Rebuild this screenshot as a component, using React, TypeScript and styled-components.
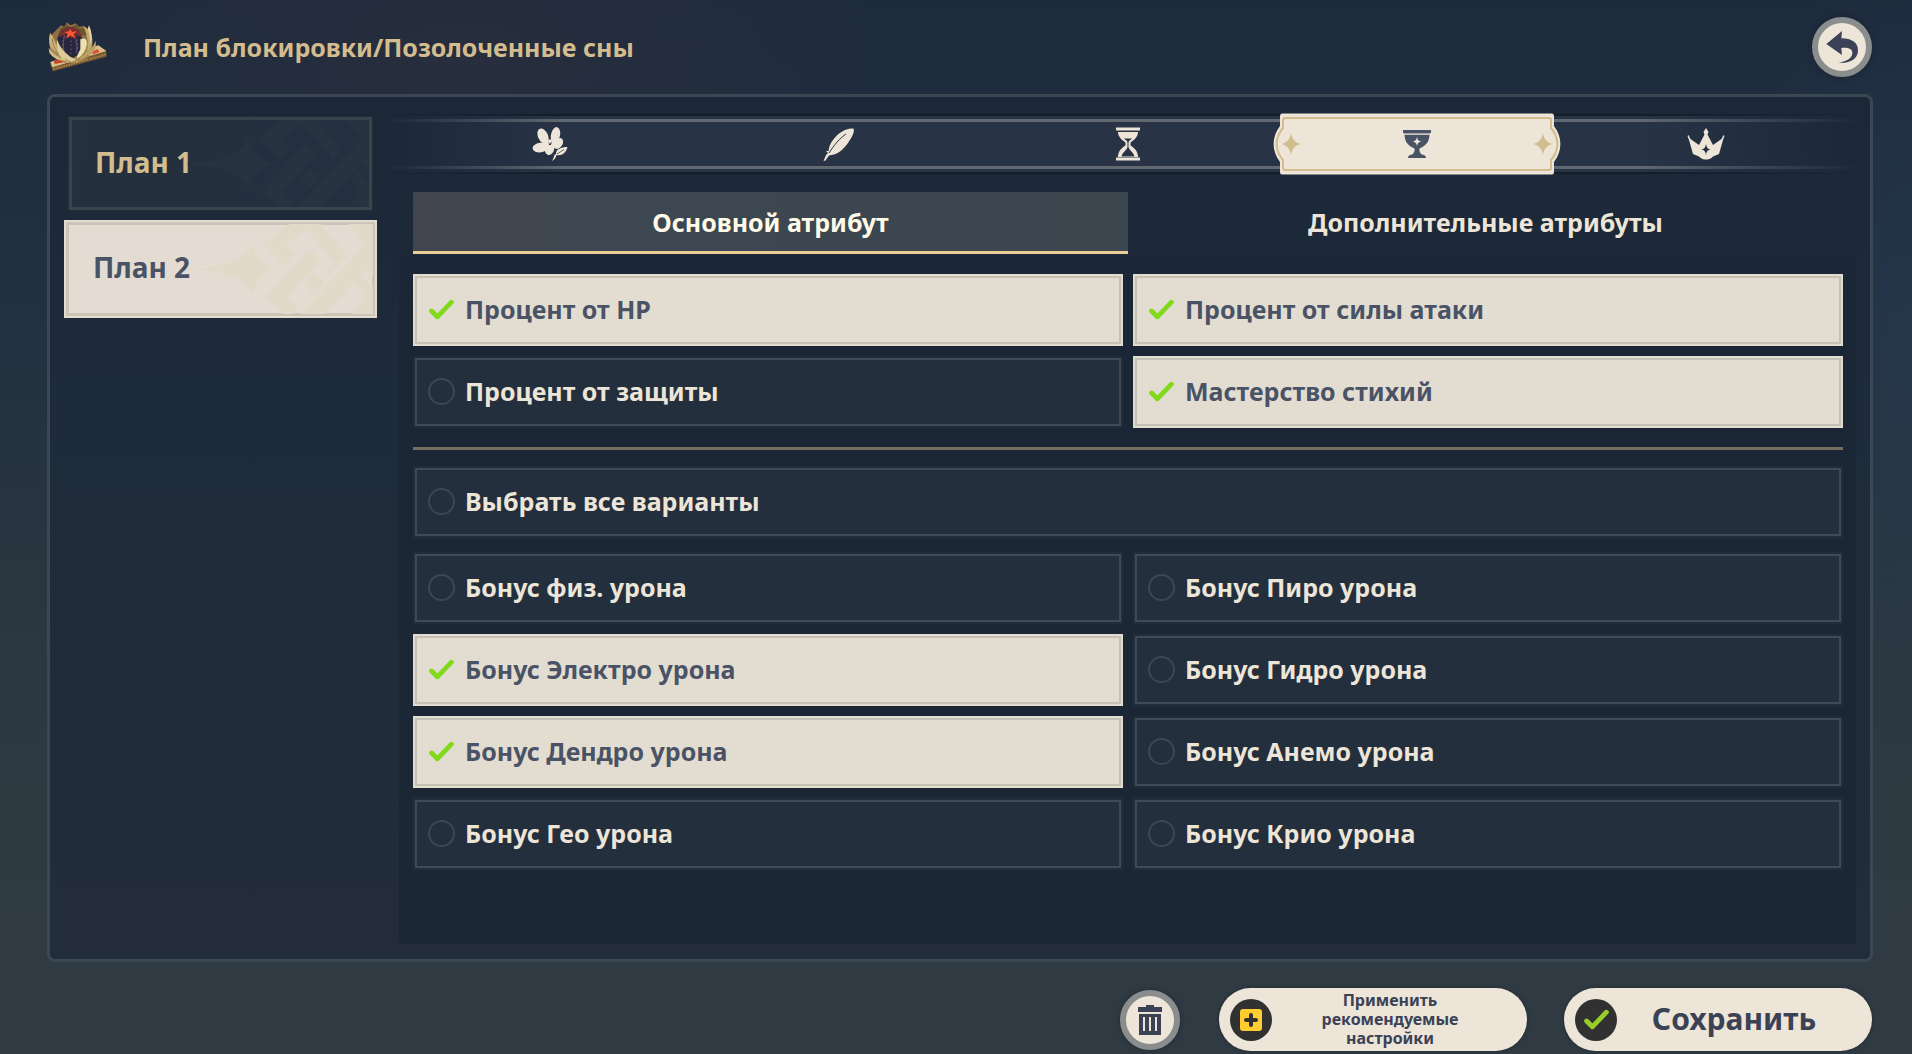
import React, { useState } from "react";
import styled, { createGlobalStyle, css } from "styled-components";

const color = {
  cream: "#ece5d8",
  gold: "#d3bc8e",
  ink: "#4a5366",
  inkDark: "#3b4255",
  paper: "#e3ddd1",
  paperEdge: "#c6c1b5",
  slate: "#242f3e",
  slateEdge: "#414a54",
};

const GlobalStyle = createGlobalStyle`
  *, *::before, *::after { box-sizing: border-box; }
  body {
    margin: 0;
    font-family: "Noto Sans", "Open Sans", sans-serif;
    font-weight: 700;
    color: ${color.cream};
    background: #202d3e;
  }
  button { font: inherit; color: inherit; border: 0; padding: 0; background: none; cursor: pointer; }
  svg { display: block; }
`;

const Page = styled.div`
  min-height: 100vh;
  display: flex;
  flex-direction: column;
  background:
    radial-gradient(ellipse 22% 26% at 24% 6%, rgba(54, 48, 60, 0.35), transparent),
    radial-gradient(ellipse 10% 36% at 100% 32%, rgba(42, 64, 90, 0.4), transparent),
    linear-gradient(180deg, #1e2b3d 0%, #212f40 25%, #283540 50%, #2e3a42 75%, #303a43 100%);
`;

const Header = styled.header`
  height: 94px;
  padding: 0 40px 0 47px;
  display: flex;
  align-items: center;
`;

const Title = styled.h1`
  flex: 1;
  margin: 0 0 0 34px;
  font-size: 25px;
  line-height: 36px;
  font-weight: 700;
  color: ${color.gold};
`;

const RoundButton = styled.button`
  width: 60px;
  height: 60px;
  border: 6px solid #8a8d8d;
  border-radius: 50%;
  background: ${color.cream};
  color: ${color.inkDark};
  display: grid;
  place-items: center;
  box-shadow: 0 0 6px rgba(0, 0, 0, 0.25);
`;

const Panel = styled.main`
  flex: 1;
  margin: 0 39px 0 47px;
  display: flex;
  border: 3px solid #3b4854;
  border-radius: 8px;
  background: linear-gradient(180deg, #1c2838 0%, #1e2b3a 40%, #202c39 75%, #232d39 100%);
`;

const PlanList = styled.nav`
  width: 335px;
  padding: 19px 8px 19px 14px;
  display: flex;
  flex-direction: column;
  align-items: center;
  gap: 9px;
`;

const PlanButton = styled.button<{ $active: boolean }>`
  position: relative;
  overflow: hidden;
  display: flex;
  align-items: center;
  text-align: left;
  font-size: 28px;
  line-height: 36px;
  ${(p) =>
    p.$active
      ? css`
          width: 313px;
          height: 98px;
          padding: 0 0 4px 29px;
          color: ${color.ink};
          background: #e4dcd2;
          box-shadow: inset 0 0 0 2px #e4dcd0, inset 0 0 0 5px #cdc4b8;
        `
      : css`
          width: 305px;
          height: 95px;
          padding: 0 0 4px 27px;
          color: ${color.gold};
          background: linear-gradient(100deg, #24303d, #242f40);
          box-shadow: inset 0 0 0 1px #222e3b, inset 0 0 0 4px #38434a;
        `}
`;

const PlanOrnament = styled.svg`
  position: absolute;
  right: 4px;
  top: 4px;
  height: calc(100% - 8px);
  width: 184px;
`;

const Content = styled.section`
  flex: 1;
  display: flex;
  flex-direction: column;
  padding: 16px 0 15px;
`;

const SlotBar = styled.div`
  position: relative;
  height: 62px;
  padding: 0 20px;
  display: grid;
  grid-template-columns: repeat(5, 1fr);
  &::before {
    content: "";
    position: absolute;
    inset: 1px 8px 1px 0;
    border: solid #141e2b;
    border-width: 2px 0;
    background:
      linear-gradient(#626872, #626872) 0 3px / 100% 3px no-repeat,
      linear-gradient(#626872, #626872) 0 calc(100% - 3px) / 100% 3px no-repeat,
      #283345;
    mask-image: linear-gradient(90deg, transparent, #000 12%, #000 85%, transparent);
  }
`;

const SlotTab = styled.button<{ $active: boolean }>`
  position: relative;
  display: grid;
  place-items: center;
  color: ${(p) => (p.$active ? color.ink : color.cream)};
  > svg { grid-area: 1 / 1; }
`;

const AttributeTabs = styled.div`
  margin: 17px 27px 1px 28px;
  display: grid;
  grid-template-columns: 1fr 1fr;
`;

const AttributeTab = styled.button<{ $active: boolean }>`
  height: 62px;
  font-size: 25px;
  line-height: 36px;
  border-bottom: 3px solid ${(p) => (p.$active ? "#e9cf95" : "transparent")};
  color: ${(p) => (p.$active ? "#fffbe8" : color.cream)};
  background: ${(p) => (p.$active ? "linear-gradient(90deg, #42454f 0%, #3d4751 30%, #3c464f 100%)" : "none")};
`;

const OptionArea = styled.div`
  flex: 1;
  margin: 0 14px;
  padding: 19px 13px 19px 14px;
  border-radius: 4px;
  background: linear-gradient(180deg, #1b2636 0%, #1b2734 60%, #1c2734 100%);
`;

const OptionGrid = styled.div`
  display: grid;
  grid-template-columns: 1fr 1fr;
  gap: 10px;
`;

const Divider = styled.hr`
  height: 3px;
  margin: 19px 0 16px;
  border: 0;
  background: #756c5d;
`;

const OptionBlock = styled.div`
  margin-bottom: 14px;
`;

const Option = styled.label<{ $checked: boolean }>`
  height: 72px;
  padding: 0 15px 2px;
  display: flex;
  align-items: center;
  gap: 10px;
  font-size: 25px;
  line-height: 36px;
  cursor: pointer;
  ${(p) =>
    p.$checked
      ? css`
          color: ${color.ink};
          background: ${color.paper};
          box-shadow: inset 0 0 0 2px ${color.paper}, inset 0 0 0 4px ${color.paperEdge};
        `
      : css`
          color: ${color.cream};
          background: ${color.slate};
          box-shadow: inset 0 0 0 2px #222d3b, inset 0 0 0 4px ${color.slateEdge};
        `}
`;

const Tick = styled.span`
  width: 27px;
  height: 27px;
  display: grid;
  place-items: center;
  > * { grid-area: 1 / 1; }
`;

const TickInput = styled.input`
  appearance: none;
  width: 27px;
  height: 27px;
  margin: 0;
  border: 2px solid #3c4753;
  border-radius: 50%;
  &:checked { border-color: transparent; }
`;

const Footer = styled.footer`
  padding: 26px 40px 3px;
  display: flex;
  justify-content: flex-end;
  align-items: center;
`;

const ActionButton = styled.button<{ $small?: boolean }>`
  width: 308px;
  height: 63px;
  margin-left: ${(p) => (p.$small ? "39px" : "37px")};
  padding: 0 11px;
  display: flex;
  align-items: center;
  border-radius: 32px;
  background: ${color.cream};
  color: ${color.inkDark};
  font-size: ${(p) => (p.$small ? "16px" : "30px")};
  line-height: ${(p) => (p.$small ? "19px" : "40px")};
  box-shadow: 0 0 4px rgba(0, 0, 0, 0.25);
`;

const Badge = styled.span`
  width: 42px;
  height: 42px;
  flex: none;
  display: grid;
  place-items: center;
  border-radius: 50%;
  background: #313131;
`;

const ActionText = styled.span<{ $small?: boolean }>`
  flex: 1;
  text-align: center;
  padding: ${(p) => (p.$small ? "0 54px 0 46px" : "0 26px 2px 16px")};
`;

const CheckIcon = ({ size, stroke }: { size: number; stroke: string }) => (
  <svg width={size} height={size} viewBox="0 0 24 24" fill="none" aria-hidden="true">
    <path d="M2.5 13.5 L8 19 L21.5 5" stroke={stroke} strokeWidth="4.6" strokeLinecap="round" strokeLinejoin="round" />
  </svg>
);

const ArtifactIcon = () => (
  <svg width="62" height="50" viewBox="50 40 186 150" aria-hidden="true">
    <path d="M60 166 L204 112 L228 128 L228 144 L68 188 Z" fill="#7c5a31" />
    <path d="M60 160 L204 110 L228 127 L66 176 Z" fill="#d9c08a" />
    <path d="M70 158 L92 146 L104 160 L74 166 Z" fill="#c8452b" />
    <path d="M184 129 L202 121 L208 130 L188 137 Z" fill="#d85231" />
    <path d="M68 182 L228 137" stroke="#b08c50" strokeWidth="4" strokeDasharray="5 3" />
    <path d="M66 76 L80 62 L92 50 L102 54 L110 41 L120 50 L136 44 L146 54 L162 52 L182 74 L178 118 L78 120 Z" fill="#8d7145" />
    <path d="M88 62 L108 47 L120 56 L138 48 L148 60 L160 58 L170 80 L86 84 Z" fill="#6d5430" />
    <path d="M66 76 Q52 96 60 124 Q70 150 104 162 Q150 166 178 140 Q190 120 184 90 L150 130 L90 128 Z" fill="#a48a55" />
    <ellipse cx="118" cy="102" rx="38" ry="47" fill="#27263f" />
    <path d="M83 86 Q90 56 118 55 Q148 56 155 86 Q120 68 83 86 Z" fill="#76332f" />
    <path d="M104 80 Q94 104 103 140 M132 80 Q142 100 138 134" fill="none" stroke="#55496a" strokeWidth="4" />
    <path d="M101 84 Q92 108 102 142 M122 84 V142 M136 82 Q146 100 140 128" fill="none" stroke="#d4a66e" strokeWidth="2" strokeDasharray="3 9" />
    <path d="M119 56 L125 68 L146 66 L131 76 L138 92 L121 82 L106 92 L111 76 L96 69 L115 67 Z" fill="#ff5733" stroke="#5a1d25" strokeWidth="2" />
    <path d="M60 72 Q68 84 72 98 Q80 120 92 134 Q72 130 60 112 Q52 92 60 72 Z" fill="#cbb27a" />
    <path d="M80 92 Q92 126 120 144 Q134 152 146 156 Q120 168 96 152 Q76 132 80 92 Z" fill="#ddcc98" />
    <path d="M55 118 Q70 141 106 156 Q72 156 57 132 Z" fill="#d3bd83" />
    <path d="M150 92 Q168 84 170 102 Q166 136 140 150 Q140 140 150 122 Z" fill="#efe0b0" />
    <path d="M160 54 Q176 58 183 78 Q190 96 182 116 L170 134 Q178 92 160 54 Z" fill="#c4aa70" />
    <path d="M176 50 Q190 80 180 108 Q180 78 172 60 Z" fill="#e8d49b" />
    <path d="M196 96 Q201 125 176 142 Q152 164 122 162 Q156 148 168 130 Q186 121 196 96 Z" fill="#bca066" />
    <path d="M174 139 Q164 151 143 158 M66 90 Q66 112 80 128 M104 151 L124 161 L149 150" fill="none" stroke="#816438" strokeWidth="2" />
  </svg>
);

const BackIcon = () => (
  <svg width="46" height="46" viewBox="177 75 138 138" fill="currentColor" aria-hidden="true">
    <path d="M199 135 L246 96 L244 118 C276 118 295 132 294 155 C293 181 268 194 236 191 C262 187 276 177 277 163 C278 150 265 145 244 147 L246 168 Z" />
  </svg>
);

const TrashIcon = () => (
  <svg width="26" height="30" viewBox="0 0 26 30" fill="currentColor" aria-hidden="true">
    <path d="M1 2 H9 V0 H17 V2 H25 V7 H1 Z" />
    <path fillRule="evenodd" d="M2 9 H24 V30 H2 Z M6 12 V26 H8 V12 Z M12 12 V26 H14 V12 Z M18 12 V26 H20 V12 Z" />
  </svg>
);

const PlusIcon = () => (
  <svg width="22" height="22" viewBox="0 0 22 22" aria-hidden="true">
    <rect x="0" y="0" width="22" height="22" rx="3" fill="#ffcc32" />
    <path d="M11 6 V16 M6 11 H16" stroke="#313131" strokeWidth="4" strokeLinecap="round" />
  </svg>
);

const FlowerIcon = () => (
  <svg width="36" height="35" viewBox="532 127 36 35" fill="currentColor" aria-hidden="true">
    <ellipse cx="543" cy="136" rx="5" ry="8" transform="rotate(-24 543 136)" />
    <ellipse cx="555.5" cy="135" rx="4.5" ry="8" transform="rotate(12 555.5 135)" />
    <ellipse cx="540.5" cy="147.5" rx="8" ry="4.8" transform="rotate(-8 540.5 147.5)" />
    <ellipse cx="549.5" cy="149.5" rx="4.5" ry="5.5" transform="rotate(20 549.5 149.5)" />
    <ellipse cx="558.5" cy="143.5" rx="4" ry="6" transform="rotate(32 558.5 143.5)" />
    <path d="M545 140 L554 139 L558 147 L550 150 L545 148 Z" />
    <path d="M548.5 141 L549.5 144 L552 141.5 L550.8 145 L549 145 Z" fill="#283345" />
    <path d="M556 154 C556 149 561 147 567.5 147 C566 153 562 156 556.5 155 C556 158 554 160 552 161 C554.5 157 554 154 556 154 Z" />
    <path d="M557 154 L564 149.5" stroke="#283345" strokeWidth="0.7" />
  </svg>
);

const FeatherIcon = () => (
  <svg width="32" height="35" viewBox="824 127 32 35" fill="currentColor" aria-hidden="true">
    <path d="M854.5 128.5 C847 127.5 839 133 834 140 C831 144 830 147 829.5 151 L827 151 L829 153 L827 155 L824.5 161 L826.5 160.5 L830 155.5 C838 155 844 150 849 143 C853 137 856 132 854.5 128.5 Z" />
    <path d="M830 153 C835 145 841 138 847 134" fill="none" stroke="#283345" strokeWidth="1" />
  </svg>
);

const HourglassIcon = () => (
  <svg width="24" height="34" viewBox="0 0 24 34" fill="currentColor" aria-hidden="true">
    <path d="M0 0.5 H24 V3.5 H0 Z M0 30.5 H24 V33.5 H0 Z" />
    <path
      fillRule="evenodd"
      d="M2 5 H22 C22 10 18 13 14.5 15.5 V18.5 C19 21 22 25 22 30 H2 C2 25 5 21 9.5 18.5 V15.5 C6 13 2 10 2 5 Z M8 11.5 C9 13 11.5 13.5 11.5 15.5 V20 C10.5 24 6.5 25 5.5 29.5 H18.5 C17.500 25 13.5 24 12.5 20 V15.5 C12.5 13.5 15 13 16 11.5 Z"
    />
  </svg>
);

const GobletIcon = () => (
  <svg width="28" height="28" viewBox="0 0 28 28" fill="currentColor" aria-hidden="true">
    <rect width="28" height="3" />
    <rect x="1" y="3" width="26" height="1.5" fill="#a9a4a6" />
    <path
      fillRule="evenodd"
      d="M1.5 5 H26.5 C26 13 22 16 16.5 18.5 C16 21 17 23.5 19 24.5 C22 25 23 26 23 28 H5 C5 26 6 25 9 24.5 C11 23.5 12 21 11.5 18.5 C6 16 2 13 1.5 5 Z M14 6.5 C13.5 10 12.5 11 9.5 11.5 C12.5 12 13.5 13 14 16.5 C14.5 13 15.5 12 18.5 11.5 C15.5 11 14.5 10 14 6.5 Z"
    />
  </svg>
);

const CrownIcon = () => (
  <svg width="38" height="32" viewBox="0 0 38 32" fill="currentColor" aria-hidden="true">
    <path
      fillRule="evenodd"
      d="M19 0 L21.5 4 L20.5 6.5 L26 17 L34.5 11 L36.5 7 L37.5 8 L36 12 L32 26 L26 28.5 C24 31 21 31.5 19 31.5 C17 31.5 14 31 12 28.5 L6 26 L2 12 L0.5 8 L1.5 7 L3.5 11 L12 17 L17.5 6.5 L16.5 4 Z M19 15.5 C18.5 19.5 17.5 21 14 21.5 C17.5 22 18.5 23.5 19 27 C19.5 23.5 20.5 22 24 21.5 C20.5 21 19.5 19.5 19 15.5 Z"
    />
  </svg>
);

const SlotFrame = () => (
  <svg width="288" height="62" viewBox="0 0 288 62" aria-hidden="true">
    <path
      d="M9 0.5 H279 Q281 0.5 281 3 V13 C289.5 24 289.5 38 281 49 V59 Q281 61.5 279 61.5 H9 Q7 61.5 7 59 V49 C-1.5 38 -1.5 24 7 13 V3 Q7 0.5 9 0.5 Z"
      fill="#ece5d8"
    />
    <path
      d="M12 5 H276 Q278 5 278 8 V15 C286.5 25 286.5 37 278 47 V54 Q278 57 276 57 H12 Q10 57 10 54 V47 C1.5 37 1.5 25 10 15 V8 Q10 5 12 5 Z"
      fill="none"
      stroke={color.gold}
      strokeWidth="2"
    />
    {[18, 270].map((x) => (
      <path
        key={x}
        transform={`translate(${x} 31)`}
        d="M0 -11 C1.5 -4 4 -1.5 10 0 C4 1.5 1.5 4 0 11 C-1.5 4 -4 1.5 -10 0 C-4 -1.5 -1.5 -4 0 -11 Z"
        fill={color.gold}
      />
    ))}
  </svg>
);

const Ornament = ({ tint }: { tint: string }) => (
  <PlanOrnament viewBox="388 372 552 270" preserveAspectRatio="xMaxYMid slice" aria-hidden="true">
    <path d="M390 507 Q555 500 577 430 Q592 495 652 507 Q592 520 577 585 Q555 515 390 507 Z" fill={tint} />
    <g fill={tint}>
      <path d="M610 430 L690 372 H782 L860 467 L700 642 H672 L617 590 L750 447 L782 482 L682 590 L712 620 L828 490 L738 386 L678 438 L702 465 L672 495 Z" />
      <path d="M732 552 L763 520 L791 550 L763 586 Z" />
      <path d="M722 642 L918 432 L866 372 H940 V530 L918 508 L796 642 Z" />
      <path d="M882 548 L904 526 L940 562 V642 H876 L918 592 Z" />
    </g>
  </PlanOrnament>
);

const slots = [
  { id: "flower", label: "Цветок", Icon: FlowerIcon },
  { id: "feather", label: "Перо", Icon: FeatherIcon },
  { id: "sands", label: "Часы", Icon: HourglassIcon },
  { id: "goblet", label: "Кубок", Icon: GobletIcon },
  { id: "circlet", label: "Корона", Icon: CrownIcon },
];

const baseOptions = ["Процент от HP", "Процент от силы атаки", "Процент от защиты", "Мастерство стихий"];
const selectAll = "Выбрать все варианты";
const damageOptions = [
  "Бонус физ. урона",
  "Бонус Пиро урона",
  "Бонус Электро урона",
  "Бонус Гидро урона",
  "Бонус Дендро урона",
  "Бонус Анемо урона",
  "Бонус Гео урона",
  "Бонус Крио урона",
];

export default function App() {
  const [plan, setPlan] = useState("План 2");
  const [slot, setSlot] = useState("goblet");
  const [tab, setTab] = useState("Основной атрибут");
  const [checked, setChecked] = useState<string[]>([
    "Процент от HP",
    "Процент от силы атаки",
    "Мастерство стихий",
    "Бонус Электро урона",
    "Бонус Дендро урона",
  ]);

  const toggle = (name: string) =>
    setChecked((list) => (list.includes(name) ? list.filter((n) => n !== name) : [...list, name]));

  const renderOption = (name: string) => {
    const on = checked.includes(name);
    return (
      <Option key={name} $checked={on}>
        <Tick>
          <TickInput type="checkbox" checked={on} onChange={() => toggle(name)} />
          {on && <CheckIcon size={25} stroke="#82d91c" />}
        </Tick>
        {name}
      </Option>
    );
  };

  return (
    <>
      <GlobalStyle />
      <Page>
        <Header>
          <ArtifactIcon />
          <Title>План блокировки/Позолоченные сны</Title>
          <RoundButton aria-label="Назад">
            <BackIcon />
          </RoundButton>
        </Header>

        <Panel>
          <PlanList>
            {["План 1", "План 2"].map((name) => (
              <PlanButton key={name} $active={plan === name} onClick={() => setPlan(name)}>
                <Ornament tint={plan === name ? "#e2d9c9" : "#283342"} />
                {name}
              </PlanButton>
            ))}
          </PlanList>

          <Content>
            <SlotBar>
              {slots.map(({ id, label, Icon }) => (
                <SlotTab key={id} $active={slot === id} aria-label={label} onClick={() => setSlot(id)}>
                  {slot === id && <SlotFrame />}
                  <Icon />
                </SlotTab>
              ))}
            </SlotBar>

            <AttributeTabs>
              {["Основной атрибут", "Дополнительные атрибуты"].map((name) => (
                <AttributeTab key={name} $active={tab === name} onClick={() => setTab(name)}>
                  {name}
                </AttributeTab>
              ))}
            </AttributeTabs>

            <OptionArea>
              <OptionGrid>{baseOptions.map(renderOption)}</OptionGrid>
              <Divider />
              <OptionBlock>{renderOption(selectAll)}</OptionBlock>
              <OptionGrid>{damageOptions.map(renderOption)}</OptionGrid>
            </OptionArea>
          </Content>
        </Panel>

        <Footer>
          <RoundButton aria-label="Удалить">
            <TrashIcon />
          </RoundButton>
          <ActionButton $small>
            <Badge>
              <PlusIcon />
            </Badge>
            <ActionText $small>Применить рекомендуемые настройки</ActionText>
          </ActionButton>
          <ActionButton>
            <Badge>
              <CheckIcon size={25} stroke="#97cf2a" />
            </Badge>
            <ActionText>Сохранить</ActionText>
          </ActionButton>
        </Footer>
      </Page>
    </>
  );
}
